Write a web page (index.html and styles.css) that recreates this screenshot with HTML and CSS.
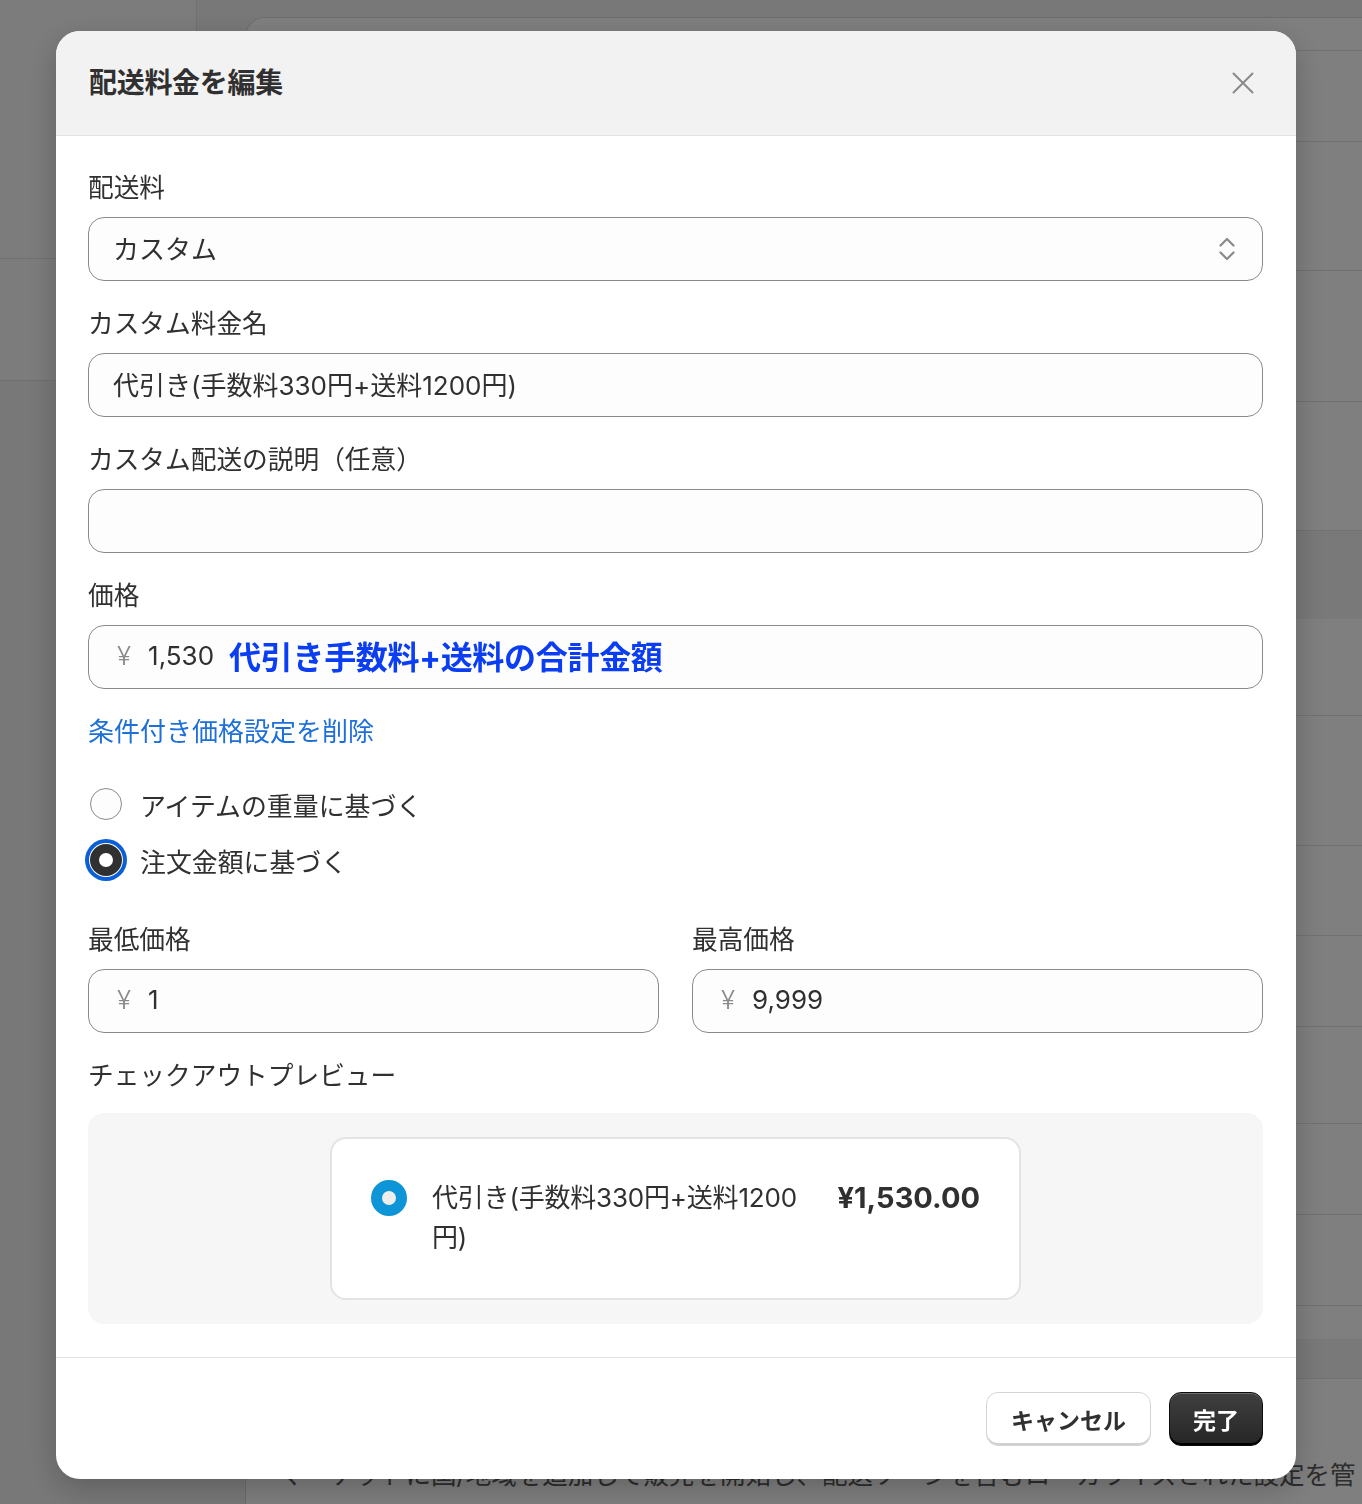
FILE: index.html
```html
<!DOCTYPE html>
<html lang="ja">
<head>
<meta charset="UTF-8">
<title>配送料金を編集</title>
<link rel="stylesheet" href="styles.css">
</head>
<body>

<div class="page">
  <aside class="side">
    <div class="side-top"></div>
  </aside>
  <main class="main">
    <section class="bg-card">
      <div class="bg-row"></div>
      <div class="bg-row"></div>
      <div class="bg-row"></div>
      <div class="bg-row"></div>
      <div class="bg-row"></div>
      <div class="bg-band"></div>
      <div class="bg-row"></div>
      <div class="bg-row"></div>
      <div class="bg-row"></div>
      <div class="bg-row"></div>
      <div class="bg-row"></div>
      <div class="bg-row"></div>
      <div class="bg-row"></div>
      <div class="bg-row bg-row-plain"></div>
      <div class="bg-band bg-band-line"></div>
      <div class="bg-row bg-row-plain"></div>
      <p class="bg-text">マーケットに国/地域を追加して販売を開始し、配送ゾーンを含むローカライズされた設定を管</p>
    </section>
  </main>
</div>

<div class="backdrop"></div>

<div class="modal" role="dialog" aria-labelledby="modal-title">
  <header class="modal-head">
    <h2 class="modal-title" id="modal-title">配送料金を編集</h2>
    <button class="close" type="button" aria-label="閉じる">
      <svg width="24" height="24" viewBox="0 0 24 24"><path d="M2.5 2.5 L21.5 21.5 M21.5 2.5 L2.5 21.5" stroke="#8a8a8a" stroke-width="2" stroke-linecap="round" fill="none"/></svg>
    </button>
  </header>

  <div class="modal-body">
    <div class="field">
      <div class="label">配送料</div>
      <div class="box select">
        <span>カスタム</span>
        <svg class="chevrons" width="16" height="24" viewBox="0 0 16 24"><path d="M1.5 8.5 L8 2 L14.5 8.5 M1.5 15.5 L8 22 L14.5 15.5" stroke="#8a8a8a" stroke-width="2.2" stroke-linecap="round" stroke-linejoin="round" fill="none"/></svg>
      </div>
    </div>

    <div class="field">
      <div class="label">カスタム料金名</div>
      <div class="box">代引き(手数料330円+送料1200円)</div>
    </div>

    <div class="field">
      <div class="label">カスタム配送の説明（任意）</div>
      <div class="box"></div>
    </div>

    <div class="field">
      <div class="label">価格</div>
      <div class="box">
        <span class="yen">¥</span><span>1,530</span><span class="note">代引き手数料+送料の合計金額</span>
      </div>
    </div>

    <a class="link" href="#">条件付き価格設定を削除</a>

    <div class="radios">
      <label class="radio-item"><span class="radio"></span>アイテムの重量に基づく</label>
      <label class="radio-item"><span class="radio radio-on"></span>注文金額に基づく</label>
    </div>

    <div class="cols">
      <div class="field">
        <div class="label">最低価格</div>
        <div class="box"><span class="yen">¥</span><span>1</span></div>
      </div>
      <div class="field">
        <div class="label">最高価格</div>
        <div class="box"><span class="yen">¥</span><span>9,999</span></div>
      </div>
    </div>

    <div class="field field-preview">
      <div class="label">チェックアウトプレビュー</div>
      <div class="preview">
        <div class="preview-card">
          <span class="preview-radio"></span>
          <span class="preview-name">代引き(手数料330円+送料1200円)</span>
          <span class="preview-price">¥1,530.00</span>
        </div>
      </div>
    </div>
  </div>

  <footer class="modal-foot">
    <button class="btn" type="button">キャンセル</button>
    <button class="btn btn-primary" type="button">完了</button>
  </footer>
</div>

</body>
</html>
```

FILE: styles.css
```css
* {
	box-sizing: border-box;
}

html, body {
	margin: 0;
	height: 100%;
}

body {
	background-color: #f1f1f1;
	color: #303030;
	font-family: Inter, "Noto Sans CJK JP", sans-serif;
	overflow: hidden;
}

/* page behind the dialog */
.page {
	display: flex;
	align-items: flex-start;
	height: 100%;
	overflow: hidden;
}

.side {
	flex-shrink: 0;
	width: 197px;
	height: 381px;
	background-color: #f8f8f8;
	border-right: 1px solid #e0e0e0;
	border-bottom: 1px solid #e0e0e0;
}

.side-top {
	height: 259px;
	border-bottom: 1px solid #e0e0e0;
}

.main {
	flex: 1;
	min-width: 0;
	height: 100%;
	padding: 17px 0 0 48px;
	overflow: hidden;
}

.bg-card {
	display: grid;
	grid-template-rows: 33px 91px 129px 131px 129px 88px 97px 130px 90px 91px 97px 91px 91px 33px 40px 78px auto;
	height: 100%;
	background-color: #fff;
	border: 1px solid #dadada;
	border-right: none;
	border-bottom: none;
	border-radius: 20px 0 0 0;
	overflow: hidden;
}

.bg-row {
	border-bottom: 1px solid #e3e3e3;
}

.bg-row-plain {
	border-bottom: none;
}

.bg-band {
	background-color: #f3f3f3;
}

.bg-band-line {
	border-bottom: 1px solid #e3e3e3;
}

.bg-text {
	margin: 0;
	padding-left: 32px;
	font-size: 25.5px;
	line-height: 36px;
	color: #5a5a5a;
	white-space: nowrap;
}

.backdrop {
	position: fixed;
	inset: 0;
	background-color: rgba(0, 0, 0, 0.5);
}

/* dialog */
.modal {
	position: fixed;
	top: 31px;
	left: 56px;
	width: 1240px;
	background-color: #fff;
	border-radius: 24px;
	overflow: hidden;
	box-shadow: 0 10px 30px rgba(0, 0, 0, 0.22);
}

.modal-head {
	display: flex;
	align-items: center;
	justify-content: space-between;
	height: 105px;
	padding: 0 33px;
	background-color: #f2f2f2;
	border-bottom: 1px solid #e3e3e3;
}

.modal-title {
	margin: 0;
	font-size: 28px;
	font-weight: 700;
	line-height: 40px;
	letter-spacing: -0.3px;
}

.close {
	display: flex;
	align-items: center;
	justify-content: center;
	width: 40px;
	height: 40px;
	padding: 0;
	border: none;
	background: none;
}

.modal-body {
	display: flex;
	flex-direction: column;
	padding: 36px 33px 33px 32px;
}

.field + .field {
	margin-top: 27px;
}

.label {
	margin-bottom: 13px;
	font-size: 25.7px;
	line-height: 32px;
}

.box {
	display: flex;
	align-items: center;
	height: 64px;
	padding: 0 24px 4px;
	background-color: #fdfdfd;
	border: 1px solid #8a8a8a;
	border-radius: 16px;
	font-size: 26px;
	white-space: nowrap;
}

.select {
	justify-content: space-between;
	padding-right: 27px;
}

.chevrons {
	margin-top: 3px;
}

.yen {
	margin: 0 17px 0 4px;
	color: #8a8a8a;
	font-weight: 300;
}

.note {
	margin-left: 15px;
	color: #0b3df2;
	font-size: 32px;
	font-weight: 700;
	letter-spacing: -0.3px;
}

.link {
	align-self: flex-start;
	margin-top: 27px;
	color: #1f6fd8;
	font-size: 26px;
	line-height: 32px;
	text-decoration: none;
}

.radios {
	display: flex;
	flex-direction: column;
	gap: 12px;
	margin-top: 34px;
}

.radio-item {
	display: flex;
	align-items: center;
	gap: 18px;
	height: 44px;
	padding-left: 2px;
	font-size: 25.9px;
}

.radio {
	flex-shrink: 0;
	width: 32px;
	height: 32px;
	border: 1px solid #8a8a8a;
	border-radius: 50%;
	background-color: #fdfdfd;
}

.radio-on {
	border: 9px solid #303030;
	background-color: #fff;
	box-shadow: 0 0 0 1px #fff, 0 0 0 5px #0a5fd9;
}

.cols {
	display: grid;
	grid-template-columns: 1fr 1fr;
	gap: 33px;
	margin-top: 42px;
}

.cols .field + .field {
	margin-top: 0;
}

.field-preview {
	margin-top: 27px;
}

.field-preview .label {
	margin-bottom: 21px;
}

.preview {
	padding: 24px;
	background-color: #f6f6f6;
	border-radius: 16px;
}

.preview-card {
	display: flex;
	align-items: flex-start;
	width: 691px;
	margin: 0 auto;
	padding: 39px 39px 40px 39px;
	background-color: #fff;
	border: 2px solid #e3e3e3;
	border-radius: 16px;
}

.preview-radio {
	flex-shrink: 0;
	width: 36px;
	height: 36px;
	margin-top: 2px;
	border: 11px solid #0e95d7;
	border-radius: 50%;
	background-color: #eeeeee;
}

.preview-name {
	flex: 1;
	margin: 0 36px 0 25px;
	font-size: 26px;
	line-height: 40px;
	letter-spacing: -0.2px;
}

.preview-price {
	font-size: 29px;
	font-weight: 700;
	line-height: 40px;
	white-space: nowrap;
}

.modal-foot {
	display: flex;
	align-items: center;
	justify-content: flex-end;
	gap: 18px;
	height: 122px;
	padding: 0 33px;
	border-top: 1px solid #e3e3e3;
}

.btn {
	height: 54px;
	padding: 0 24px;
	background-color: #fff;
	border: 1px solid #d4d4d4;
	border-radius: 12px;
	box-shadow: inset 0 -2px 0 #d0d0d0;
	color: #303030;
	font-family: Inter, "Noto Sans CJK JP", sans-serif;
	font-size: 23px;
	font-weight: 700;
}

.btn-primary {
	padding: 0 23px;
	background: linear-gradient(#3f3f3f, #262626);
	border: 1px solid #0c0c0c;
	box-shadow: inset 0 1px 0 rgba(255, 255, 255, 0.25), inset 0 -2px 0 #000;
	color: #fff;
}
```
